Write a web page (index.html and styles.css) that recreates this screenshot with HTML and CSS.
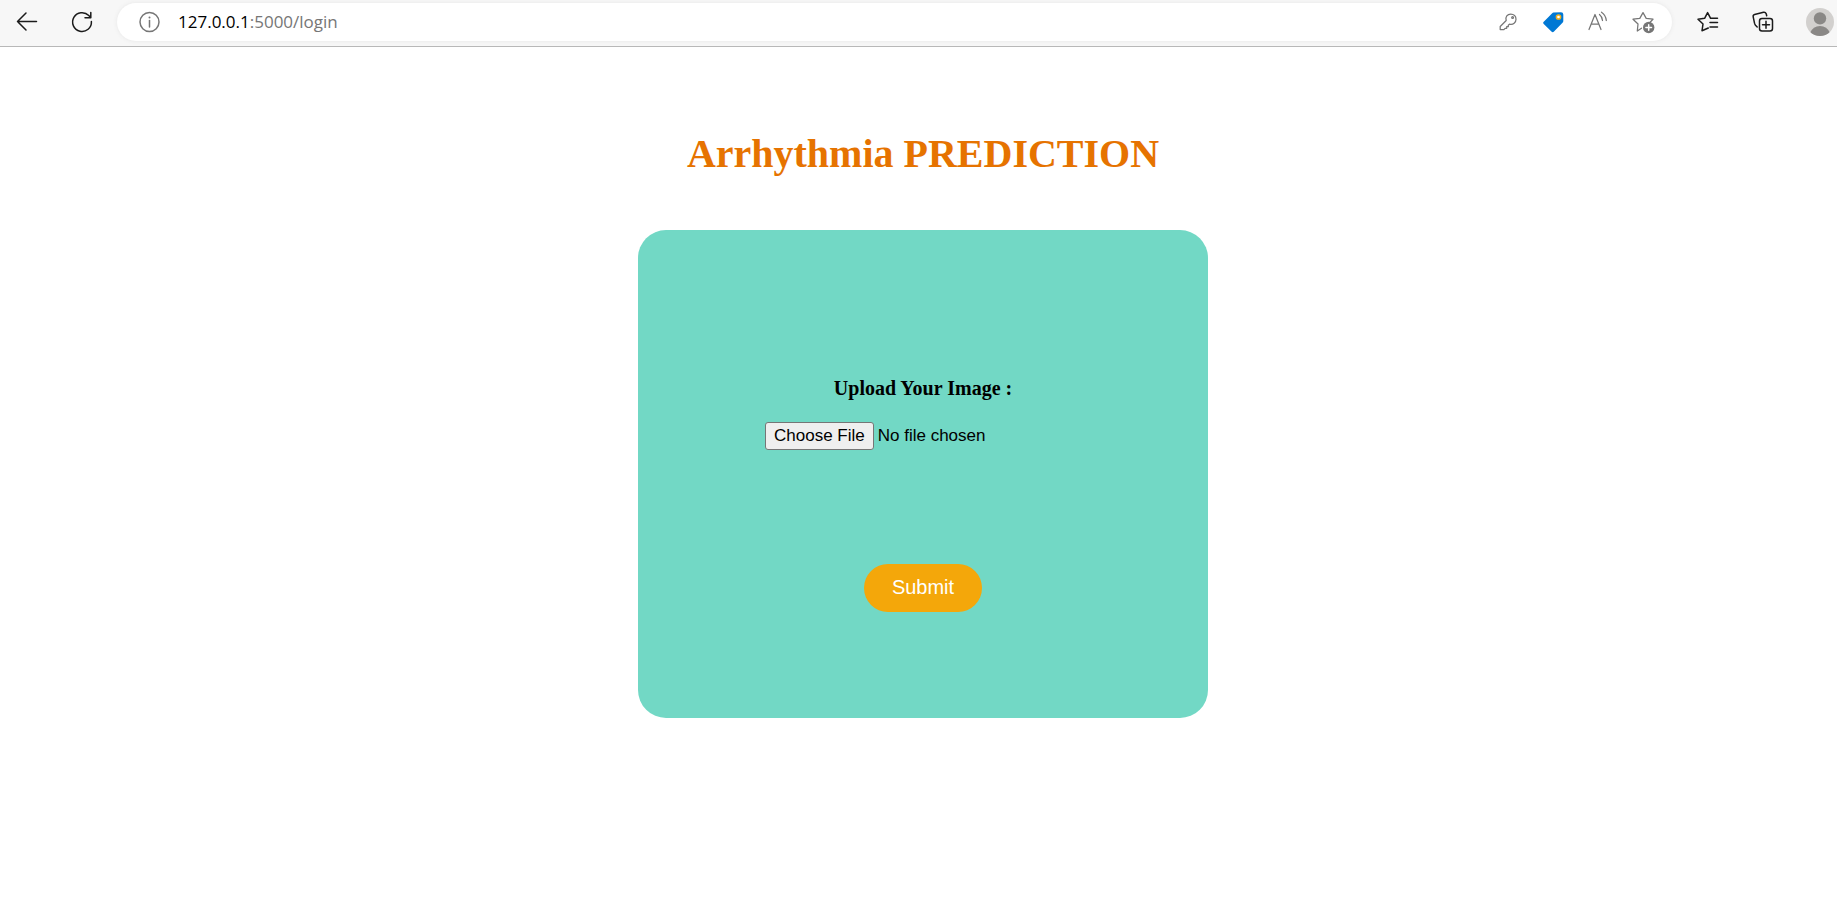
FILE: index.html
```html
<!DOCTYPE html>
<html lang="en">
<head>
<meta charset="utf-8">
<title>Arrhythmia Prediction</title>
<link rel="stylesheet" href="styles.css">
</head>
<body>
<header class="toolbar">
  <button class="icon-btn" aria-label="Back">
    <svg width="24" height="24" viewBox="0 0 24 24"><path d="M21.5 11.500H2.500M11 3L2.500 11.500L11 20"/></svg>
  </button>
  <button class="icon-btn reload" aria-label="Refresh">
    <svg width="24" height="24" viewBox="0 0 24 24"><path d="M21.400 11.500A9.400 9.400 0 1 1 18.800 5.600L20.500 7.500M20.800 2.500V7.700H15"/></svg>
  </button>
  <div class="address">
    <button class="icon-btn muted" aria-label="Site information">
      <svg width="24" height="24" viewBox="0 0 24 24"><circle cx="12.500" cy="12" r="9.500"/><path d="M12.500 10.500V17"/><circle class="solid" cx="12.500" cy="7.500" r="1"/></svg>
    </button>
    <p class="url"><span class="host">127.0.0.1</span>:5000/login</p>
    <div class="actions">
      <button class="icon-btn muted thin" aria-label="Passwords">
        <svg width="24" height="24" viewBox="0 0 24 24"><path d="M10.200 10.500C9 6.800 11.500 4 14.700 4C17.800 4 20 6.300 20 9.200C20 12.500 17.200 15 13.500 14.100L12.300 15.300V16.700H10.700V18.300H9.100L7.900 19.600H4.200V16.500Z"/><circle cx="16.600" cy="7.500" r=".9"/></svg>
      </button>
      <button class="icon-btn" aria-label="Shopping">
        <svg width="24" height="24" viewBox="0 0 24 24"><path class="tag" d="M12.500 2.500L20 2.200Q22.300 2.200 22.300 4.500V11Q22.300 12 21.500 12.800L13 21.500Q11.700 22.800 10.400 21.500L2.500 13.700Q1.700 12.800 2.500 12L11.200 3.200Q11.800 2.500 12.500 2.500Z"/><circle class="tag-hole" cx="17.500" cy="7" r="2.100"/></svg>
      </button>
      <button class="icon-btn muted thin" aria-label="Read aloud">
        <svg width="24" height="24" viewBox="0 0 24 24"><path d="M3 19.500L9 4.500L15 19.500M5.200 14.200H12.800M13.500 4.500Q16.300 6.800 16.500 10.500M15.500 2.200Q19.800 5 20.300 10.500"/></svg>
      </button>
      <button class="icon-btn muted thin" aria-label="Add to favorites">
        <svg width="24" height="24" viewBox="0 0 24 24"><path d="M10.500 18.200L6.300 21L7 14L2 9.200L8.800 8.400L12 2.600L15.200 8.400L22 9.200L18.800 12.500"/><circle class="solid" cx="17.700" cy="17.500" r="5.700"/><path class="plus" d="M17.700 14.700V20.300M14.900 17.500H20.500"/></svg>
      </button>
    </div>
  </div>
  <div class="browser-actions">
    <button class="icon-btn" aria-label="Favorites">
      <svg width="24" height="24" viewBox="0 0 24 24"><path d="M12.300 18L6 20.800L7 14L2 9.200L8.600 8.300L11.600 2.600L14.600 8.300H21.500M14 12.500H21.500M14 17H21.500"/></svg>
    </button>
    <button class="icon-btn" aria-label="Collections">
      <svg width="24" height="24" viewBox="0 0 24 24"><rect x="8.500" y="8.500" width="13" height="12.500" rx="2.500"/><path d="M15 11.300V18.300M11.500 14.800H18.500M6.200 17L4.500 15.300Q3.800 14.500 3.500 13.200L2.200 6.800Q1.800 5 3.600 4.500L12.500 2.300Q14.500 2 15.200 3.700L15.700 5.700"/></svg>
    </button>
    <button class="icon-btn profile" aria-label="Profile">
      <svg width="28" height="28" viewBox="0 0 28 28"><defs><clipPath id="disc"><circle cx="14" cy="14" r="14"/></clipPath></defs><g clip-path="url(#disc)"><rect class="disc" width="28" height="28"/><circle class="person" cx="14" cy="10.400" r="6.200"/><path class="person" d="M4 25Q7 18 14 18T24 25V28H4Z"/></g></svg>
    </button>
  </div>
</header>
<main class="page">
  <h1 class="title">Arrhythmia PREDICTION</h1>
  <form class="card">
    <label class="label" for="image">Upload Your Image :</label>
    <input class="file" id="image" type="file">
    <button class="submit" type="submit">Submit</button>
  </form>
</main>
</body>
</html>
```
FILE: styles.css
```css
* { box-sizing: border-box; }
body {
  margin: 0;
  background: #fff;
  font-family: "Liberation Serif", "Times New Roman", serif;
}
.toolbar {
  display: flex;
  align-items: center;
  height: 47px;
  padding: 0 3px 3px 15px;
  background: #f7f7f7;
  border-bottom: 1px solid #b8b8b8;
}
.icon-btn {
  display: flex;
  flex: none;
  padding: 0;
  border: 0;
  background: none;
  color: #1b1b1b;
}
.icon-btn svg {
  fill: none;
  stroke: currentColor;
  stroke-width: 1.5;
  stroke-linejoin: round;
  stroke-linecap: round;
}
.thin svg { stroke-width: 1.25; }
.muted { color: #767676; }
.icon-btn .solid { fill: currentColor; stroke: none; }
.icon-btn .plus { stroke: #fff; stroke-width: 1.5; }
.icon-btn .tag { fill: #0078d4; stroke: none; }
.icon-btn .tag-hole { fill: #fff; stroke: #f2b01e; }
.icon-btn .disc { fill: #d2d0ce; stroke: none; }
.icon-btn .person { fill: #8a8886; stroke: none; }
.reload { margin: 0 23px 0 31px; }
.address {
  display: flex;
  flex: 1;
  align-items: center;
  height: 38px;
  padding: 0 17px 0 20px;
  border-radius: 19px;
  background: #fff;
  box-shadow: 0 0 4px #e6e6e6;
}
.url {
  flex: 1;
  margin: 0 0 0 17px;
  font: 17px "Segoe UI", "Open Sans", sans-serif;
  color: #767676;
}
.host { color: #000; }
.actions { display: flex; gap: 21px; }
.browser-actions {
  display: flex;
  align-items: center;
  gap: 31px;
  margin-left: 24px;
}
.page {
  display: flex;
  flex-direction: column;
  align-items: center;
  padding: 84px 0 40px 9px;
}
.title {
  margin: 0 0 53px;
  font-size: 40px;
  line-height: 46px;
  color: #e67300;
}
.card {
  display: flex;
  flex-direction: column;
  align-items: center;
  width: 570px;
  max-width: 100%;
  padding: 147px 24px 106px;
  border-radius: 28px;
  background: #72d8c5;
}
.label {
  font-size: 20px;
  font-weight: bold;
  line-height: 22px;
  color: #000;
}
.file {
  width: 316px;
  max-width: 100%;
  height: 28px;
  margin: 23px 0 114px;
  font: 17px "Liberation Sans", Arial, sans-serif;
  color: #000;
}
.file::file-selector-button {
  height: 28px;
  padding: 0 8px;
  font: inherit;
  border: 1px solid #767676;
  border-radius: 3px;
  background: #efefef;
  color: #000;
}
.submit {
  height: 48px;
  padding: 0 28px 2px;
  border: 0;
  border-radius: 24px;
  background: #f4a70a;
  font: 20px "Liberation Sans", Arial, sans-serif;
  color: #fff;
}
```
